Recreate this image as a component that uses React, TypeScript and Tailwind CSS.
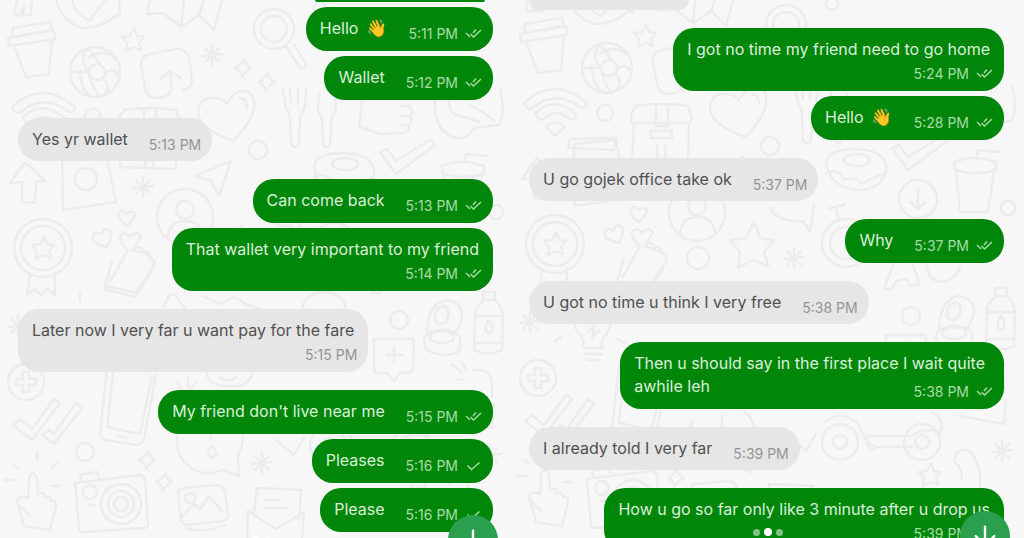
import React from 'react';
import { ArrowDown } from 'lucide-react';
import clsx from 'clsx';

type Message = {
  lines: string[];
  time: string;
  emoji?: string;
  mine?: boolean;
  status?: 'sent' | 'read';
  stacked?: boolean;
};

const firstChat: Message[] = [
  { lines: ['Hello'], emoji: '👋', time: '5:11 PM', mine: true, status: 'read' },
  { lines: ['Wallet'], time: '5:12 PM', mine: true, status: 'read' },
  { lines: ['Yes yr wallet'], time: '5:13 PM' },
  { lines: ['Can come back'], time: '5:13 PM', mine: true, status: 'read' },
  { lines: ['That wallet very important to my friend'], time: '5:14 PM', mine: true, status: 'read', stacked: true },
  { lines: ['Later now I very far u want pay for the fare'], time: '5:15 PM', stacked: true },
  { lines: ["My friend don't live near me"], time: '5:15 PM', mine: true, status: 'read' },
  { lines: ['Pleases'], time: '5:16 PM', mine: true, status: 'sent' },
  { lines: ['Please'], time: '5:16 PM', mine: true, status: 'sent' },
];

const secondChat: Message[] = [
  { lines: ['I got no time my friend need to go home'], time: '5:24 PM', mine: true, status: 'read', stacked: true },
  { lines: ['Hello'], emoji: '👋', time: '5:28 PM', mine: true, status: 'read' },
  { lines: ['U go gojek office take ok'], time: '5:37 PM' },
  { lines: ['Why'], time: '5:37 PM', mine: true, status: 'read' },
  { lines: ['U got no time u think I very free'], time: '5:38 PM' },
  { lines: ['Then u should say in the first place I wait quite', 'awhile leh'], time: '5:38 PM', mine: true, status: 'read' },
  { lines: ['I already told I very far'], time: '5:39 PM' },
  { lines: ['How u go so far only like 3 minute after u drop us'], time: '5:39 PM', mine: true, status: 'read', stacked: true },
];

const asterisks = [[212, 55], [143, 187], [282, 262], [18, 326], [262, 463], [490, 455]];
const sparkles = [[243, 68], [267, 82], [147, 460], [164, 482]];
const rings = [[93, 117, 8], [258, 150, 9], [496, 212, 7], [186, 262, 11], [399, 320, 9], [85, 452, 9], [320, 8, 6]];
const stars = [[133, 40, 1], [43, 248, 1], [240, 250, 2], [418, 479, 1]];

/* Faint doodles behind the conversation */
const Doodles = ({ className }: { className?: string }) => (
  <svg
    className={clsx('absolute inset-x-0 w-full h-full', className)}
    viewBox="0 0 512 538"
    preserveAspectRatio="xMidYMin slice"
    fill="none"
    stroke="#ececec"
    strokeWidth="2.4"
    strokeLinecap="round"
    strokeLinejoin="round"
    aria-hidden="true"
  >
    {asterisks.map(([x, y]) => (
      <path key={`${x}-${y}`} transform={`translate(${x} ${y})`} d="M0-10V10M-10 1L10-1M-7-7L7 7M-7 7L7-7" />
    ))}
    {sparkles.map(([x, y]) => (
      <path key={`${x}-${y}`} transform={`translate(${x} ${y})`} d="M1-9Q2-3 8 0Q2 3-1 9Q-2 3-8 0Q-2-3 1-9Z" />
    ))}
    {rings.map(([x, y, r]) => (
      <circle key={`${x}-${y}`} cx={x} cy={y} r={r} />
    ))}
    {stars.map(([x, y, s]) => (
      <path key={`${x}-${y}`} transform={`translate(${x} ${y}) scale(${s})`} strokeWidth={2.4 / s} d="M1-12L4-4L11-3L6 3L8 10L0 7L-7 11L-6 3L-11-3L-3-4Z" />
    ))}

    {/* legs, ball, map */}
    <path d="M17 0L14 14L20 16L24 5L23 15L31 15L32 0M56 0Q62 22 82 28Q103 28 118 14L120 17L119 0M72 0Q76 16 90 20L105 0" />
    <path d="M150 0L147 14L163 13L181 27L199 15L214 30L222 0M181 27L184 0M199 15L204 0" />

    {/* coffee cup and globe */}
    <path d="M13 28L50 22L52 30L12 37ZM8 38L54 30L55 39L9 46ZM14 46L26 77L49 74L52 40" />
    <circle cx="95" cy="72" r="25" />
    <circle cx="97" cy="72" r="8" />
    <path d="M88 48Q78 60 89 72Q90 84 99 96M88 58Q102 48 115 58M80 70Q80 88 90 96M105 74Q114 64 119 78M104 79Q112 88 104 95M70 72L89 72M88 48L100 64" />

    {/* share square */}
    <path d="M183 90Q193 88 192 80L189 58Q186 48 176 49L150 54Q140 56 141 66L145 88Q147 98 158 98Q170 97 172 88L170 72M160 80L170 71L181 78" />

    {/* heart and magnifier */}
    <path d="M233 141Q198 128 198 112Q199 99 210 98Q222 97 227 104Q234 90 245 91Q256 94 254 108Q251 124 233 141ZM240 98Q247 99 247 108" />
    <circle cx="274" cy="29" r="20" />
    <circle cx="274" cy="29" r="13" />
    <path d="M286 46L299 66Q304 72 306 64L294 44" />

    {/* wifi */}
    <path d="M13 106Q42 80 74 106Q76 112 69 112Q44 92 19 113Q12 112 13 106ZM23 117Q43 99 64 118Q62 126 56 122Q43 111 30 124Q24 122 23 117ZM34 131Q43 122 53 131L43 140Z" />

    {/* treasure chest */}
    <path d="M124 110Q150 106 176 110L180 122L178 127L120 127L119 118ZM122 127L120 167L176 169L177 127M144 109V130H156V110M139 135H160V142H139ZM145 150V168M153 150V168" />

    {/* arrow, package, plane */}
    <path d="M25 162L45 181L36 182L35 203L22 202L22 182L10 183ZM62 148L104 144L116 202L63 210ZM58 143L56 152L102 154L104 142Z" />
    <circle cx="86" cy="179" r="11" />
    <path d="M231 161L195 176L211 181L219 196Z" />

    {/* person badge */}
    <circle cx="185" cy="217" r="28" />
    <circle cx="185" cy="210" r="9" />
    <path d="M168 238Q169 221 185 221Q201 221 203 237" />

    {/* medal */}
    <circle cx="43" cy="248" r="29" />
    <circle cx="43" cy="248" r="22" />
    <path d="M30 275L27 295L35 289L41 295L47 288L55 296L55 273" />

    {/* hearts and hand */}
    <path d="M127 226Q114 216 120 212Q124 210 127 214Q132 209 135 214Q134 220 127 226ZM107 247Q90 243 93 235Q97 231 101 235Q105 226 110 231Q113 236 107 247Z" />
    <path d="M120 236Q126 230 130 237Q136 230 141 236L133 250L151 256M110 282L128 250Q119 243 120 236M132 250Q140 244 143 251Q151 250 149 258Q157 259 153 267L136 293L105 286" />

    {/* fork, spoon, fist, steak */}
    <path d="M283 90L286 108Q290 113 290 118L291 144Q295 150 299 144L300 117Q306 110 306 90M290 90L291 103M298 90V103M320 94Q315 110 322 118L323 145Q327 149 330 144L332 117Q340 106 332 92" />
    <path d="M362 101L359 127L380 134L404 133Q411 130 408 125Q414 122 410 117Q415 112 410 108M400 106H410M401 116H410M401 125H408" />
    <path d="M435 100Q434 124 446 133Q454 140 466 137L475 128L499 125Q506 115 500 90M449 100Q448 114 460 116L480 122M470 105Q488 115 494 120" />

    {/* check and donut */}
    <path d="M380 152L387 149L396 161L430 140L435 145L396 174Z" />
    <path d="M314 168Q314 154 340 153Q372 153 374 170Q375 190 350 194Q320 194 314 168ZM314 178Q326 170 332 184Q342 179 350 188Q362 180 373 178" />
    <ellipse cx="345" cy="164" rx="13" ry="6" />

    {/* drink */}
    <path d="M442 166Q462 158 484 166L484 174Q464 180 443 174ZM444 176L448 216L476 216L482 176M464 163L466 154L487 156" />
    <circle cx="406" cy="203" r="19" />
    <path d="M406 193V212M398 206L406 213L414 206" />

    {/* stopwatch and chat */}
    <circle cx="334" cy="247" r="24" />
    <circle cx="334" cy="247" r="16" />
    <path d="M316 213L333 208M324 212L326 222M258 212Q264 225 292 226L298 236L302 208" />

    {/* bulb and phone slip */}
    <path d="M72 352Q72 341 65 335Q56 318 76 311Q100 310 99 328Q96 337 90 344L90 352ZM73 358H90M75 364H88M76 336L82 330L80 342L87 334M43 345L49 341M105 343L113 347M112 262L104 289L135 297L151 272M80 294V301" />
    <path d="M164 308Q170 288 176 296L186 310M202 296L220 304L234 297L248 305L264 310M302 310Q304 292 325 292Q345 294 346 310" />

    {/* letters, food, bottle */}
    <path d="M372 293L384 262L398 262L408 288L398 290L394 283L384 285L380 293ZM414 262Q414 285 430 286Q444 284 448 270" />
    <path d="M427 332Q428 304 446 300Q462 302 462 316Q460 326 456 331M436 322Q433 308 444 306Q452 310 446 322Q440 326 436 322ZM424 340Q426 330 444 330Q462 332 460 342V350Q452 357 438 354Q424 352 424 340Z" />
    <ellipse cx="442" cy="337" rx="12" ry="6" />
    <path d="M483 292H495V300H483ZM484 300Q474 308 475 316L474 350Q488 357 502 350L503 316Q502 307 495 300M475 316H503M474 343H503M489 320Q482 330 489 334Q496 330 489 320" />

    {/* add bubble */}
    <path d="M374 339H411Q414 339 414 342L413 370Q412 373 408 373H400L394 381L387 373H377Q374 373 374 369ZM394 347V362M387 355H402M452 365L462 372M462 362L466 370M456 379L462 380M474 370Q492 368 492 385V397" />

    {/* plus, ticks, phone */}
    <circle cx="26" cy="382" r="18" />
    <path d="M23 372H29V379H36V385H29V392H23V385H16V379H23ZM13 425L20 419L32 429L54 399L60 403L32 440ZM42 435L49 430L54 434L76 403L82 408L54 444Z" />
    <path d="M107 370L100 432Q100 438 106 440L136 445Q142 445 144 438L156 375M113 373L107 427L140 434L152 376M118 436L126 437" />
    <path d="M177 382L181 389M188 378V387M196 382L189 391M206 372Q210 387 228 386Q248 388 252 374M220 377Q228 384 236 377" />

    {/* alert bubble, kite */}
    <path d="M180 425Q170 455 193 469Q207 477 222 470L239 476L238 457Q250 430 232 415M210 420L211 440M208 450L213 446L217 454L211 459ZM276 440L294 455L304 438" />

    {/* scooter */}
    <circle cx="328" cy="446" r="18" />
    <circle cx="328" cy="446" r="7" />
    <circle cx="410" cy="446" r="18" />
    <circle cx="410" cy="446" r="7" />
    <path d="M312 426Q332 412 348 430Q354 450 366 451L400 451M356 440H400Q412 430 428 437Q434 425 420 416M356 440Q352 452 362 453M448 420L492 428L494 404M442 466Q444 450 458 455Q470 470 468 492M442 466Q450 470 450 484" />

    {/* pointing hand */}
    <path d="M29 515L17 503Q17 494 28 498L29 477Q33 470 37 478L38 494Q44 490 45 498Q50 494 51 501Q57 500 56 507L50 530L24 526L17 500M5 480H14M13 464L18 468M37 452V460M52 467L57 463M52 486H59" />

    {/* camera */}
    <path d="M75 483L140 475Q144 475 145 480L148 524Q148 528 144 528L83 532Q79 532 79 528ZM81 480L80 475L97 472L99 478M88 505H95" />
    <circle cx="90" cy="492" r="7" />
    <circle cx="121" cy="504" r="20" />
    <circle cx="121" cy="504" r="13" />
    <circle cx="121" cy="504" r="7" />

    {/* picture and envelope */}
    <path d="M178 495Q178 489 184 488L217 485Q224 486 225 492L228 514Q229 520 223 521L188 525Q182 525 181 519ZM183 516L194 504L200 509L209 496L222 511M186 528Q204 534 225 525" />
    <circle cx="190" cy="498" r="5" />
    <path d="M257 488L301 490L299 520M257 488L254 512M248 511L276 529L304 512M248 511L247 538M304 512L302 538M266 500H280M266 508H288" />
  </svg>
);

const Status = ({ kind }: { kind: 'sent' | 'read' }) => (
  <svg width="17" height="12" viewBox="0 0 17 12" fill="none" stroke="currentColor" strokeWidth="1.4" role="img" aria-label={kind}>
    {kind === 'read' ? <path d="M1 5L5 9M5.5 6L8.5 9L16 2M8 5L11 1.5" /> : <path d="M2.5 5.5L6.5 9.5L14.5 2.5" />}
  </svg>
);

const Bubble = ({ message }: { message: Message }) => {
  const { lines, emoji, time, mine, status, stacked } = message;
  const opening = lines.slice(0, -1);
  const last = lines[lines.length - 1];

  return (
    <li
      className={clsx(
        'rounded-[21px] pt-2.5 pl-3.5 pr-[11px] text-base leading-[23px] whitespace-nowrap',
        mine ? 'self-end bg-[#00870a] text-[#dcefd8]' : 'self-start bg-[#e6e6e6] text-[#505050]',
        mine || stacked ? 'pb-2' : 'pb-[7px]'
      )}
    >
      {opening.map((line) => (
        <p key={line} className="pr-2">{line}</p>
      ))}
      <div className={clsx('flex', stacked ? 'flex-col gap-1' : 'items-end justify-between gap-[21px]')}>
        <p className={clsx('flex items-center gap-2', stacked ? 'pr-[3px]' : 'pb-[3px]')}>
          {last}
          {emoji && <span className="text-[17px]">{emoji}</span>}
        </p>
        <div
          className={clsx(
            'flex items-center gap-[7px] self-end text-sm leading-[18px]',
            mine ? 'text-[#a9dba6]' : 'text-[#949494]'
          )}
        >
          <time>{time}</time>
          {status && <Status kind={status} />}
        </div>
      </div>
    </li>
  );
};

const Chat = ({ messages }: { messages: Message[] }) => (
  <>
    {messages.map((message, index) => {
      const previous = messages[index - 1];
      const grouped = previous ? previous.mine === message.mine : false;
      return (
        <React.Fragment key={index}>
          {index > 0 && <li aria-hidden="true" className={grouped ? 'h-[5px]' : 'h-[18px]'} />}
          <Bubble message={message} />
        </React.Fragment>
      );
    })}
  </>
);

const ScrollButton = ({ className }: { className: string }) => (
  <button
    type="button"
    aria-label="Scroll to latest"
    className={clsx('absolute size-[50px] rounded-full bg-[#2a9f4e] text-white flex items-center justify-center', className)}
  >
    <ArrowDown size={32} strokeWidth={1.8} />
  </button>
);

const Dots = ({ className }: { className: string }) => (
  <div className={clsx('absolute -translate-x-1/2 flex items-center gap-1', className)}>
    <span className="size-[7px] rounded-full bg-white/50"></span>
    <span className="size-2 rounded-full bg-white"></span>
    <span className="size-[7px] rounded-full bg-white/50"></span>
  </div>
);

const App = () => {
  return (
    <main className="relative grid grid-cols-2 h-screen overflow-hidden bg-[#f7f7f7] font-['Inter','Noto_Color_Emoji',sans-serif]">
      <section aria-label="Chat, 5:11 PM" className="relative overflow-hidden">
        <Doodles className="top-0" />
        <ul className="relative flex flex-col pl-[18px] pr-[19px]">
          <li aria-hidden="true" className="self-end w-[186px] h-0.5 mb-[5px] px-2">
            <div className="h-full rounded-b-full bg-[#00870a]"></div>
          </li>
          <Chat messages={firstChat} />
        </ul>
        <Dots className="left-1/2 -bottom-1.5" />
        <ScrollButton className="right-3.5 -bottom-[27px]" />
      </section>

      <section aria-label="Chat, 5:24 PM" className="relative overflow-hidden">
        <Doodles className="-top-1" />
        <ul className="relative flex flex-col pl-[17px] pr-5">
          <li aria-hidden="true" className="self-start w-[160px] h-2.5 mb-[18px] rounded-b-[21px] bg-[#e6e6e6]" />
          <Chat messages={secondChat} />
        </ul>
        <Dots className="left-1/2 bottom-0.5" />
        <ScrollButton className="right-3.5 -bottom-[23px]" />
      </section>
    </main>
  );
};

export default App;
